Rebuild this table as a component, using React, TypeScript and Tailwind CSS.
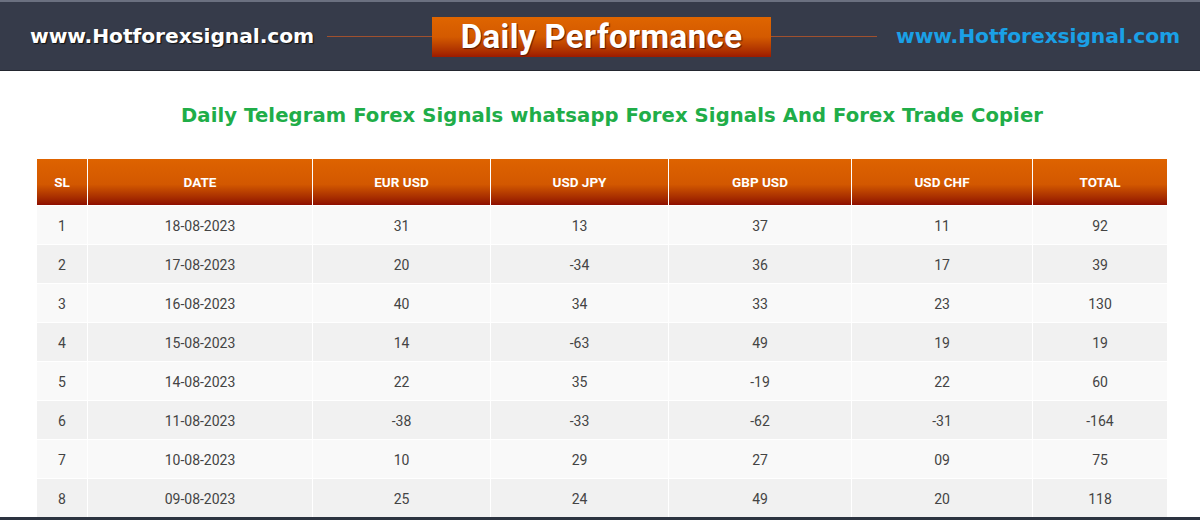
import React from "react";

const rows = [
  ["1", "18-08-2023", "31", "13", "37", "11", "92"],
  ["2", "17-08-2023", "20", "-34", "36", "17", "39"],
  ["3", "16-08-2023", "40", "34", "33", "23", "130"],
  ["4", "15-08-2023", "14", "-63", "49", "19", "19"],
  ["5", "14-08-2023", "22", "35", "-19", "22", "60"],
  ["6", "11-08-2023", "-38", "-33", "-62", "-31", "-164"],
  ["7", "10-08-2023", "10", "29", "27", "09", "75"],
  ["8", "09-08-2023", "25", "24", "49", "20", "118"],
];

const heads = ["SL", "DATE", "EUR USD", "USD JPY", "GBP USD", "USD CHF", "TOTAL"];

export default function App() {
  return (
    <div className="w-[1200px] h-[520px] overflow-hidden bg-white flex flex-col">
      {/* top banner */}
      <div className="h-[72px] bg-[#363b4a] border-t-2 border-t-[#6b7080] border-b border-b-[#23262f] flex items-center">
        <div className="w-[327px] pl-[30px] pt-[1px] text-white text-[20.3px] font-bold font-['DejaVu_Sans',sans-serif] tracking-[-0.1px] [text-shadow:1px_1px_1px_#111]">
          www.Hotforexsignal.com
        </div>
        <div className="w-[105px] h-px bg-[#a0502e]" />
        <div className="w-[339px] h-[40px] mt-[2px] flex items-center justify-center bg-gradient-to-b from-[#df6500] via-[#d45a00] to-[#9c1a00] text-white text-[33px] tracking-[0.4px] font-bold font-['Roboto',sans-serif] [text-shadow:1px_1px_1px_#5a1a00]">
          Daily Performance
        </div>
        <div className="w-[106px] h-px bg-[#a0502e]" />
        <div className="flex-1 pl-[19px] pt-[1px] text-[#1aa0e6] text-[20.3px] font-bold font-['DejaVu_Sans',sans-serif] tracking-[-0.1px]">
          www.Hotforexsignal.com
        </div>
      </div>

      {/* title */}
      <div className="h-[89px] flex items-center justify-center pt-[2px] pl-[24px]">
        <h1 className="text-[#20ad48] text-[19.6px] font-bold font-['DejaVu_Sans',sans-serif] tracking-[0.1px]">
          Daily Telegram Forex Signals whatsapp Forex Signals And Forex Trade Copier
        </h1>
      </div>

      {/* table */}
      <div className="ml-[37px] w-[1130px] grid grid-cols-[50px_224px_177px_177px_182px_180px_134px] gap-px bg-white font-['Roboto',sans-serif]">
        {heads.map((h) => (
          <div
            key={h}
            className="h-[46px] flex items-center justify-center bg-gradient-to-b from-[#de6300] via-[#d35800] via-55% to-[#8e0d00] text-white text-[13.5px] font-bold"
          >
            {h}
          </div>
        ))}
        {rows.map((r, i) =>
          r.map((c, j) => (
            <div
              key={i + "-" + j}
              className={
                "h-[38px] flex items-center justify-center pt-[2px] text-[14px] text-[#444] " +
                (i % 2 === 0 ? "bg-[#f9f9f9]" : "bg-[#f1f1f1]")
              }
            >
              {c}
            </div>
          ))
        )}
      </div>
      <div className="flex-1" />
      <div className="h-[3px] bg-[#2c3340]" />
    </div>
  );
}
